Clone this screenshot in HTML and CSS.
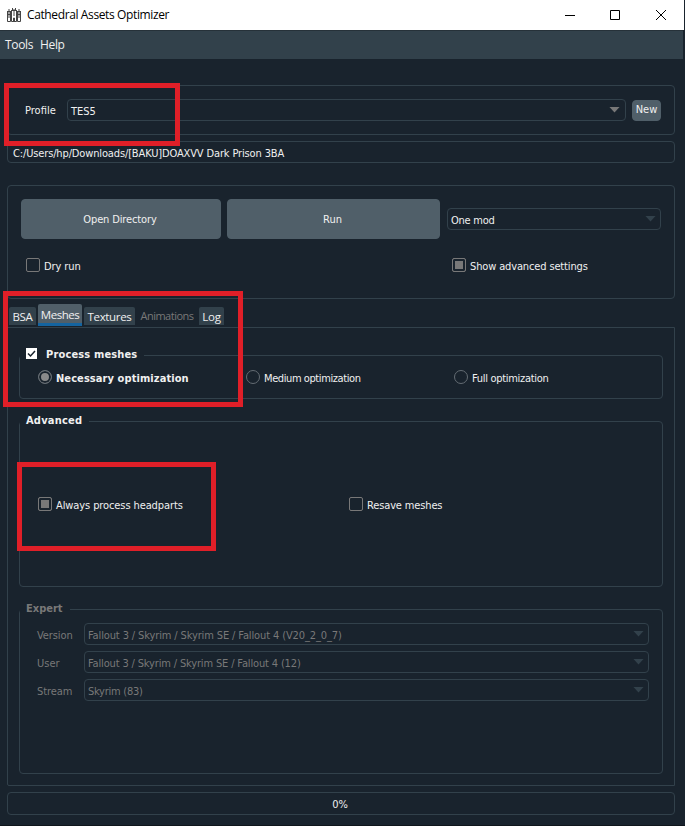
FILE: index.html
```html
<!DOCTYPE html>
<html lang="en">
<head>
<meta charset="utf-8">
<title>Cathedral Assets Optimizer</title>
<link rel="stylesheet" href="styles.css">
</head>
<body>
<div class="window">
  <header class="titlebar">
    <svg class="logo" width="14" height="14" viewBox="0 0 14 14" fill="none" stroke="#444" stroke-width="1"><path d="M.5 3.500v10h3v-10M10.500 3.500v10h3v-10M4.500 2.500v11h5v-11M7 1v7M0 3.500h4M10 3.500h4M4 2.500h6M6.500 13.500V10h1v3.500M2 1v9M12 1v9M5.500 0v2M8.500 0v2M0 6.500h3M11 6.500h3"/></svg>
    <span class="title">Cathedral Assets Optimizer</span>
    <svg class="controls" width="104" height="12" viewBox="0 0 104 12" fill="none" stroke="#000"><path d="M1 6.500h10M46.500 1.500h9v9h-9z"/><path d="M92 1l10 10M102 1L92 11"/></svg>
  </header>
  <nav class="menubar"><span class="menu-tools">Tools</span><span class="menu-help">Help</span></nav>
  <main class="content">
    <section class="frame profile">
      <span class="profile-label">Profile</span>
      <div class="combo profile-combo"><span class="t-tes">TES5</span><i class="arrow bright"></i></div>
      <button class="btn new"><span>New</span></button>
    </section>
    <div class="frame path"><span class="t-path">C:/Users/hp/Downloads/[BAKU]DOAXVV Dark Prison 3BA</span></div>
    <section class="frame actions">
      <div class="action-row">
        <button class="btn open"><span class="t-open">Open Directory</span></button>
        <button class="btn run"><span>Run</span></button>
        <div class="combo mode"><span class="t-one">One mod</span><i class="arrow"></i></div>
      </div>
      <div class="check-row">
        <label class="option dry"><i class="box"></i><span class="t-dry">Dry run</span></label>
        <label class="option"><i class="box on"></i><span class="t-show">Show advanced settings</span></label>
      </div>
    </section>
    <div class="tabs">
      <span class="tab bsa"><span>BSA</span></span><span class="tab active"><span class="t-meshes">Meshes</span></span><span class="tab textures"><span class="t-tex">Textures</span></span><span class="tab disabled"><span class="t-anim">Animations</span></span><span class="tab log"><span>Log</span></span>
    </div>
    <section class="frame pane">
      <div class="frame group process">
        <div class="legend"><svg class="tick" width="11" height="11" viewBox="0 0 11 11"><path fill="#fff" d="M0 0h11v11H0z"/><path d="M2 5.500l2.500 2.500L9 3" fill="none" stroke="#19232d" stroke-width="1.500"/></svg><b class="t-proc">Process meshes</b></div>
        <div class="radios">
          <label class="option"><i class="radio on"></i><b class="t-nec">Necessary optimization</b></label>
          <label class="option"><i class="radio"></i><span class="t-med">Medium optimization</span></label>
          <label class="option"><i class="radio"></i><span class="t-full">Full optimization</span></label>
        </div>
      </div>
      <div class="frame group advanced">
        <div class="legend"><b class="t-adv">Advanced</b></div>
        <div class="adv-row">
          <label class="option"><i class="box on"></i><span class="t-always">Always process headparts</span></label>
          <label class="option"><i class="box"></i><span class="t-resave">Resave meshes</span></label>
        </div>
      </div>
      <div class="frame group expert">
        <div class="legend"><b class="t-exp">Expert</b></div>
        <div class="fields">
          <span class="t-ver">Version</span><div class="combo"><span class="t-v20">Fallout 3 / Skyrim / Skyrim SE / Fallout 4 (V20_2_0_7)</span><i class="arrow"></i></div>
          <span class="t-user">User</span><div class="combo"><span class="t-v12">Fallout 3 / Skyrim / Skyrim SE / Fallout 4 (12)</span><i class="arrow"></i></div>
          <span class="t-stream">Stream</span><div class="combo"><span class="t-sky">Skyrim (83)</span><i class="arrow"></i></div>
        </div>
      </div>
    </section>
    <div class="frame progress"><span>0%</span></div>
  </main>
  <div class="mark mark-profile"></div>
  <div class="mark mark-meshes"></div>
  <div class="mark mark-head"></div>
</div>
</body>
</html>
```
FILE: styles.css
```css
* { box-sizing: border-box; }
body { margin: 0; background: #19232d; }
.window {
  position: relative; width: 685px; height: 826px; overflow: hidden;
  background: #19232d; color: #f0f0f0; border-bottom: 1px solid #10161c;
  font: 11px/14px "DejaVu Sans Condensed", "DejaVu Sans", sans-serif;
  white-space: nowrap;
}
.titlebar { width: 684px; height: 30px; background: #fff; color: #000; display: flex; align-items: center; padding-left: 7px; font: 12px/16px "Open Sans", sans-serif; }
.title { margin-left: 6px; width: 537px; letter-spacing: -.38px; }
.menubar { width: 683px; height: 29px; background: #32414b; border-top: 1px solid #263139; display: flex; align-items: center; padding-left: 5px; font: 12px/16px "Open Sans", sans-serif; letter-spacing: -.35px; }
.menu-tools { width: 35px; }
.content { padding: 26px 10px 0 7px; }
.frame { border: 1px solid #32414b; border-radius: 4px; width: 668px; }
.combo { border: 1px solid #32414b; border-radius: 4px; height: 22px; display: flex; align-items: center; justify-content: space-between; padding: 1px 4px 0 3px; }
.arrow { width: 11px; height: 6px; background: #32414b; clip-path: polygon(0 0, 100% 0, 50% 100%); margin-top: -2px; }
.arrow.bright { background: #787878; margin-right: 1px; }
.btn { border: 1px solid #505f69; background: #505f69; color: #f0f0f0; border-radius: 4px; font: inherit; padding: 0; display: flex; align-items: center; justify-content: center; }
.btn span { padding-top: 2px; }
.profile { height: 50px; display: flex; align-items: center; padding-left: 17px; }
.profile-label { width: 42px; padding-top: 2px; }
.profile-combo { width: 559px; }
.profile-combo span, .mode span { padding-top: 2px; }
.new { width: 29px; height: 21px; margin-left: 6px; }
.new span { padding-top: 0; }
.path { height: 22px; margin-top: 6px; padding: 5px 5px 0; }
.actions { height: 114px; margin-top: 22px; padding: 13px; }
.action-row { display: flex; align-items: center; height: 40px; }
.open { width: 200px; height: 40px; padding-right: 2px; }
.run { width: 213px; height: 40px; margin: 0 7px 0 6px; padding-right: 2px; }
.mode { width: 214px; }
.check-row { display: flex; margin: 19px 0 0 5px; }
.dry { width: 426px; }
.option { display: flex; align-items: center; gap: 4px; height: 14px; }
.option span, .option b { padding-top: 2px; }
.check-row .option span { padding-top: 3px; }
.box { width: 14px; height: 14px; border: 1px solid #787878; border-radius: 2px; display: block; }
.box.on { background: #787878; border-color: #787878; box-shadow: inset 0 0 0 2px #19232d; }
.radio { width: 14px; height: 14px; border: 1px solid #646c73; border-radius: 50%; }
.radio.on { background: #8a8a8a; box-shadow: inset 0 0 0 2px #19232d; }
.tabs { display: flex; align-items: flex-end; height: 23px; margin-top: 5px; padding-left: 2px; gap: 2px; }
.tab { display: flex; align-items: center; justify-content: center; height: 18px; background: #32414b; border-radius: 2px 2px 0 0; margin-bottom: 2px; padding-top: 1px; font: 11.5px/15px "Open Sans", sans-serif; letter-spacing: -.3px; }
.bsa { width: 27px; }
.active { width: 44px; height: 22px; margin-bottom: 1px; background: #505f69; border-bottom: 3px solid #1464a0; padding-top: 2px; }
.t-meshes { letter-spacing: -.5px; }
.t-tex { letter-spacing: -.35px; }
.textures { width: 51px; }
.disabled { width: 60px; background: none; color: #787878; margin-bottom: 3px; font-size: 11px; letter-spacing: -.5px; }
.log { width: 25px; }
.pane { height: 459px; padding: 27px 11px 0; border-radius: 0; border-bottom-left-radius: 2px; }
.group { width: 644px; position: relative; }
.legend { position: absolute; left: 0; top: -9px; height: 15px; padding: 0 7px 0 6px; background: #19232d; display: flex; align-items: center; }
.tick { margin: 0 9px 2px 0; }
.process { height: 44px; }
.radios { display: grid; grid-template-columns: 208px 208px 1fr; padding: 14px 0 0 18px; }
.radios span, .radios b { padding-top: 3px; }
.advanced { height: 166px; margin-top: 22px; }
.adv-row { display: grid; grid-template-columns: 311px 1fr; padding: 75px 0 0 18px; }
.adv-row span { padding-top: 3px; }
.expert { height: 165px; margin-top: 22px; color: #787878; }
.fields { display: grid; grid-template-columns: 47px 565px; row-gap: 6px; align-items: center; padding: 13px 0 0 17px; }
.fields > span { padding-top: 3px; }
.fields .combo span { padding-top: 2px; }
.progress { height: 23px; margin-top: 6px; display: flex; justify-content: center; align-items: center; padding: 2px 2px 0 0; }
.t-path { letter-spacing: -.14px; }
.t-dry { letter-spacing: -.1px; }
.t-one { letter-spacing: -.25px; }
.t-open { letter-spacing: -.13px; }
.t-show { letter-spacing: -.14px; }
.t-med { letter-spacing: -.41px; }
.t-full { letter-spacing: -.3px; }
.t-always { letter-spacing: -.1px; }
.t-resave { letter-spacing: -.14px; }
.t-v20 { letter-spacing: -.12px; }
.t-v12 { letter-spacing: -.15px; }
.t-sky { letter-spacing: -.25px; }
.t-proc { letter-spacing: .15px; }
.t-nec { letter-spacing: .08px; }
.t-adv { letter-spacing: .2px; }
.t-stream, .t-ver { letter-spacing: -.1px; }
.mark { position: absolute; border: 5px solid #e01f28; }
.mark-profile { left: 4px; top: 83px; width: 176px; height: 63px; }
.mark-meshes { left: 3px; top: 291px; width: 240px; height: 116px; }
.mark-head { left: 17px; top: 462px; width: 199px; height: 89px; }
```
